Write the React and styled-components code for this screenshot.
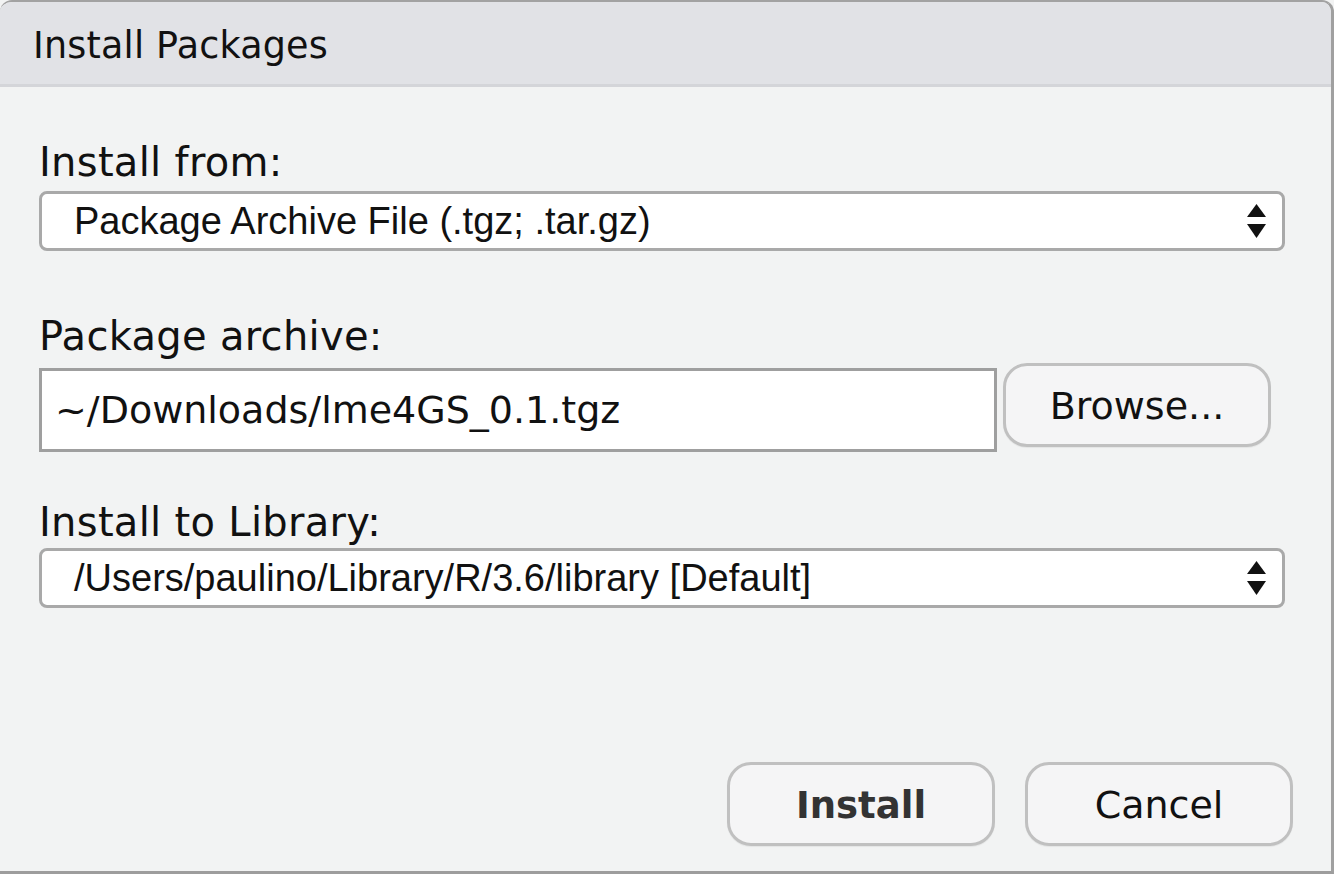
import styled, { createGlobalStyle } from "styled-components";

const GlobalStyle = createGlobalStyle`
  html, body {
    margin: 0;
    padding: 0;
    background: #f2f3f3;
  }
  * {
    box-sizing: border-box;
  }
`;

function SelectArrows() {
  return (
    <svg width="19" height="35" viewBox="0 0 19 35">
      <polygon points="9.5,0 19,13 0,13" fill="#111" />
      <polygon points="0,20 19,20 9.5,34" fill="#111" />
    </svg>
  );
}

function App() {
  return (
    <>
      <GlobalStyle />
      <Dialog>
        <Header>Install Packages</Header>
        <Body>
          <Label top={55} gap={9}>Install from:</Label>
          <Select>
            <span>Package Archive File (.tgz; .tar.gz)</span>
            <SelectArrows />
          </Select>

          <Label top={65} gap={7}>Package archive:</Label>
          <FileRow>
            <PathInput>~/Downloads/lme4GS_0.1.tgz</PathInput>
            <Button>Browse...</Button>
          </FileRow>

          <Label top={50} gap={6}>Install to Library:</Label>
          <Select>
            <span>/Users/paulino/Library/R/3.6/library [Default]</span>
            <SelectArrows />
          </Select>

          <Footer>
            <Button primary>Install</Button>
            <Button>Cancel</Button>
          </Footer>
        </Body>
      </Dialog>
    </>
  );
}

export default App;

const Dialog = styled.div`
  width: 1334px;
  height: 874px;
  display: flex;
  flex-direction: column;
  background: #f2f3f3;
  border-top: 2px solid #a2a2a2;
  border-right: 3px solid #a0a0a0;
  border-bottom: 3px solid #9d9d9d;
  border-radius: 12px 12px 0 0;
  overflow: hidden;
  font-family: "DejaVu Sans", sans-serif;
  color: #111;
`;

const Header = styled.div`
  height: 85px;
  flex-shrink: 0;
  display: flex;
  align-items: center;
  padding-left: 33px;
  padding-top: 5px;
  background: #e1e2e6;
  border-bottom: 3px solid #d4d5d9;
  font-size: 36.5px;
  letter-spacing: 0.2px;
  color: #111;
`;

const Body = styled.div`
  flex: 1;
  display: flex;
  flex-direction: column;
  padding: 0 46px 0 39px;
`;

const Label = styled.div`
  font-size: 40px;
  line-height: 40px;
  letter-spacing: 0.3px;
  margin-top: ${(props) => props.top}px;
  margin-bottom: ${(props) => props.gap}px;
`;

const Select = styled.div`
  height: 60px;
  display: flex;
  align-items: center;
  justify-content: space-between;
  padding: 0 16px 0 32px;
  background: #fff;
  border: 3px solid #a9a9a9;
  border-radius: 8px;
  font-family: "Liberation Sans", Arial, sans-serif;
  font-size: 38px;
  color: #111;
`;

const FileRow = styled.div`
  display: flex;
  align-items: flex-start;
  gap: 6px;
  padding-right: 14px;
`;

const PathInput = styled.div`
  flex: 1;
  height: 84px;
  margin-top: 5px;
  display: flex;
  align-items: center;
  padding-left: 13px;
  background: #fff;
  border: 3px solid #9f9f9f;
  font-size: 38px;
  color: #111;
`;

const Button = styled.button`
  width: 268px;
  height: 84px;
  padding: 2px 0 0;
  background: #f5f5f6;
  border: 3px solid #c0c0c0;
  border-radius: 24px;
  box-shadow: 0 1px 1px rgba(0, 0, 0, 0.06);
  font-family: "DejaVu Sans", sans-serif;
  font-size: ${(props) => (props.primary ? "37px" : "38px")};
  font-weight: ${(props) => (props.primary ? 700 : 400)};
  color: ${(props) => (props.primary ? "#333" : "#111")};
  cursor: pointer;
`;

const Footer = styled.div`
  margin-top: auto;
  margin-right: -8px;
  display: flex;
  justify-content: flex-end;
  gap: 30px;
  padding-bottom: 25px;
`;
